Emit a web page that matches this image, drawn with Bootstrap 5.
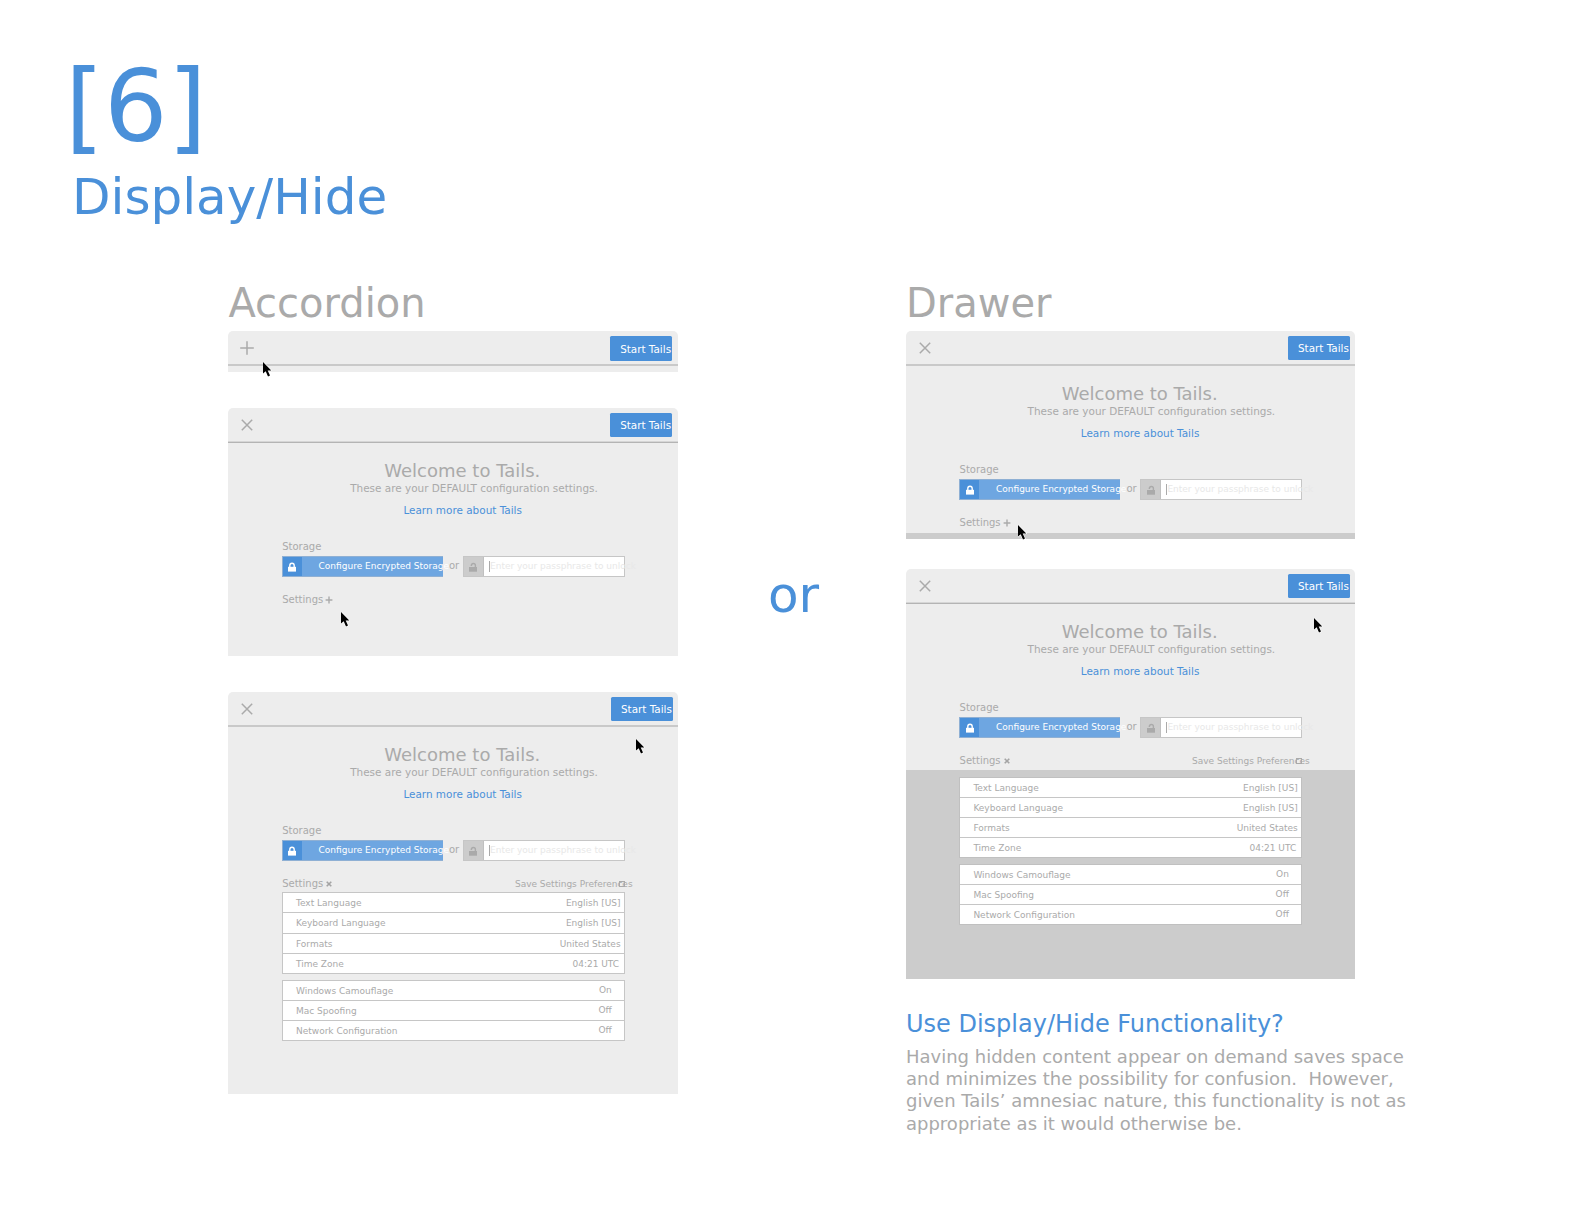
<!DOCTYPE html>
<html lang="en">
<head>
<meta charset="utf-8">
<meta name="viewport" content="width=device-width, initial-scale=1">
<title>[6] Display/Hide</title>
<link href="https://cdn.jsdelivr.net/npm/bootstrap@5.3.0/dist/css/bootstrap.min.css" rel="stylesheet">
<style>
  :root { --tails-blue: #4a90d9; --tails-gray: #aaaaaa; --tails-line: #c6c6c6; --tails-panel: #ededed; --tails-dark: #cccccc; }
  body { font-family: "DejaVu Sans", sans-serif; color: var(--tails-gray); background: #fff; width: 1584px; height: 1224px; overflow: hidden; }
  svg { display: block; overflow: visible; }
  .blue { color: var(--tails-blue); }
  .page-head { padding: 57px 0 0 65px; height: 283px; }
  .page-num { font-size: 100px; line-height: 100px; margin: 0 0 15px; font-weight: 400; }
  .page-title { font-size: 50px; line-height: 50px; margin: 0 0 0 7px; font-weight: 400; }
  .flow { padding-left: 228.4px; }
  .flow-col { width: 449px; }
  .flow-col-a { width: 449.6px; }
  .flow-name { font-size: 40px; line-height: 40px; margin: 0 0 8px; font-weight: 400; white-space: nowrap; }
  .flow-or { width: 228px; padding: 287px 0 0 90px; font-size: 50px; line-height: 50px; }
  .panel { background: var(--tails-panel); border-radius: 5px 5px 0 0; }
  .panel-bar { height: 35px; padding: 5px 5px 0 12px; border-bottom: 2px solid #c9c9c9; }
  .flow-col-a .panel-bar { padding-right: 5.8px; }
  .panel-bar.fine { border-bottom: 1px solid #b4b4b4; box-shadow: inset 0 -1px #d6d6d6; }
  .toggle { margin-top: 5px; }
  .btn-start { width: 62px; height: 24px; padding: 0 0 0 10px; border: 0; border-radius: 1.5px; background: var(--tails-blue); color: #fff; font-size: 10.4px; line-height: 24px; text-align: left; white-space: nowrap; }
  .btn-start.tall { height: 25px; line-height: 26px; }
  .inner { padding: 0 53.3px 0 53.4px; }
  .flow-col-a .inner { padding: 0 53.4px 0 53.6px; }
  .welcome { font-size: 18px; line-height: 22px; margin: 17px 0 0 102.3px; font-weight: 400; white-space: nowrap; }
  .defaults { font-size: 10.45px; line-height: 14px; margin: -1px 0 0 68.2px; white-space: nowrap; }
  .learn { font-size: 10.45px; line-height: 14px; margin: 8px 0 24px 121.4px; white-space: nowrap; }
  .learn a { color: var(--tails-blue); text-decoration: none; }
  .label { font-size: 10px; line-height: 12px; white-space: nowrap; padding-left: .2px; }
  .storage { height: 21px; margin: 3px 0 17px; }
  .btn-config { width: 161px; height: 21px; border: 1px solid #8fb0d4; border-right: 0; background: #6ea6e1; color: #fff; font-size: 9px; line-height: 19px; white-space: nowrap; border-radius: 0; padding: 0; text-align: left; flex: none; }
  .lock-cell { width: 19px; height: 19px; background: var(--tails-blue); flex: none; }
  .config-text { padding-left: 16.6px; flex: none; }
  .or-small { width: 20px; padding-left: 6px; font-size: 10px; line-height: 20px; flex: none; position: relative; }
  .pass { flex: 1; height: 21px; border: 1px solid var(--tails-line); background: #fff; font-size: 9px; line-height: 19px; }
  .pass .lock-cell { width: 20px; background: var(--tails-dark); border-right: 1px solid #c0c0c0; }
  .pass-text { color: #e8e8e8; white-space: nowrap; width: 0; padding-left: 5px; }
  .caret { width: 1px; height: 11px; margin: 4px 0 0; background: #aaa; flex: none; }
  .settings-line { height: 12px; }
  .sign { margin: 2px 0 0 2.3px; }
  .save { font-size: 9px; line-height: 12px; white-space: nowrap; }
  .tick { right: 0; top: 3px; width: 6px; height: 6px; border: 1px solid #aaa; }
  .opts { margin-top: 2px; background: #fff; border: 1px solid var(--tails-line); font-size: 9px; }
  .opts + .opts { margin-top: 6px; }
  .opts-4 { height: 82px; }
  .opts-3 { height: 61px; }
  .opt { flex: 1 1 0; padding-left: 13px; line-height: 20px; min-height: 0; }
  .opt + .opt { border-top: 1px solid var(--tails-line); }
  .end-a { padding-right: 3px; } .end-b { padding-right: 4.5px; } .end-c { padding-right: 11.8px; line-height: 18px; }
  .drawer-lip { height: 6px; background: var(--tails-dark); }
  .drawer-body { background: var(--tails-dark); margin-top: 3px; padding: 7px 53.3px 0 53.4px; height: 209px; }
  .drawer-body .opts { margin-top: 0; border-color: #c0c0c0; }
  .drawer-body .opts-4 { height: 81px; }
  .drawer-body .opts + .opts { margin-top: 6px; }
  .drawer-body .end-c { line-height: 19px; }
  .cursor { width: 9px; height: 15px; }
  .note-title { font-size: 24px; line-height: 30px; margin: 30px 0 7px; font-weight: 400; white-space: nowrap; }
  .note-text { font-size: 18px; line-height: 22.2px; margin: 0; white-space: pre; }
</style>
</head>
<body>
<svg width="0" height="0" class="position-absolute" aria-hidden="true">
  <symbol id="i-plus" viewBox="0 0 14 14"><path d="M7 .2v13.6M.2 7h13.6" stroke="#aaa" stroke-width="1.5"/></symbol>
  <symbol id="i-x" viewBox="0 0 14 14"><path d="M1.8 1.8l10.4 10.4M12.2 1.8L1.8 12.2" stroke="#aaa" stroke-width="1.5"/></symbol>
  <symbol id="i-plus-sm" viewBox="0 0 8 8"><path d="M4 .6v6.8M.6 4h6.8" stroke="#aaa" stroke-width="1.4"/></symbol>
  <symbol id="i-x-sm" viewBox="0 0 8 8"><path d="M1.7 1.7l4.6 4.6M6.3 1.7L1.7 6.3" stroke="#a4a4a4" stroke-width="1.6"/></symbol>
  <symbol id="i-lock" viewBox="0 0 10 10"><path d="M1 4.8h8v4.8H1z" fill="#fff"/><path d="M2.8 5V3.4a2.2 2.2 0 0 1 4.4 0V5" fill="none" stroke="#fff" stroke-width="1.4"/></symbol>
  <symbol id="i-unlock" viewBox="0 0 10 10"><path d="M1 5h8v4.7H1z" fill="#aaa"/><path d="M3.3 3.9C3.3 2.2 4.2 1.5 5.3 1.5S7.4 2.3 7.4 3.6v1.8" fill="none" stroke="#aaa" stroke-width="1.4"/></symbol>
  <symbol id="i-cursor" viewBox="0 0 9 15"><path d="M0 0v11.6l2.7-2.4 2.3 5.3 2-.9-2.3-5.1h3.6z" fill="#000" stroke="#fff" stroke-width="1.2" paint-order="stroke"/></symbol>
</svg>

<header class="page-head blue">
  <h1 class="page-num">[6]</h1>
  <h2 class="page-title">Display/Hide</h2>
</header>

<main class="flow d-flex align-items-start">
  <section class="flow-col-a">
    <h3 class="flow-name">Accordion</h3>

    <div class="panel position-relative" style="height:41px;margin-bottom:36px">
      <div class="panel-bar d-flex justify-content-between align-items-start">
        <svg class="toggle" width="14" height="14"><use href="#i-plus"/></svg>
        <button class="btn btn-start tall">Start Tails</button>
      </div>
      <svg class="cursor position-absolute" style="left:35px;top:31px"><use href="#i-cursor"/></svg>
    </div>

    <div class="panel position-relative" style="height:248px;margin-bottom:36px">
      <div class="panel-bar fine d-flex justify-content-between align-items-start">
        <svg class="toggle" width="14" height="14"><use href="#i-x"/></svg>
        <button class="btn btn-start">Start Tails</button>
      </div>
      <div class="inner">
        <h4 class="welcome">Welcome to Tails.</h4>
        <p class="defaults">These are your DEFAULT configuration settings.</p>
        <p class="learn"><a href="#">Learn more about Tails</a></p>
        <div class="label">Storage</div>
        <div class="storage d-flex">
          <button class="btn btn-config d-flex"><span class="lock-cell d-flex justify-content-center align-items-center"><svg width="10" height="10"><use href="#i-lock"/></svg></span><span class="config-text">Configure Encrypted Storage</span></button>
          <span class="or-small">or</span>
          <div class="pass d-flex"><span class="lock-cell d-flex justify-content-center align-items-center"><svg width="10" height="10"><use href="#i-unlock"/></svg></span><span class="pass-text d-flex"><span class="caret"></span>Enter your passphrase to unlock</span></div>
        </div>
        <div class="settings-line d-flex"><span class="label">Settings</span><svg class="sign" width="8" height="8"><use href="#i-plus-sm"/></svg></div>
      </div>
      <svg class="cursor position-absolute" style="left:113px;top:204px"><use href="#i-cursor"/></svg>
    </div>

    <div class="panel position-relative" style="height:402px">
      <div class="panel-bar d-flex justify-content-between align-items-start" style="padding-right:5px">
        <svg class="toggle" width="14" height="14"><use href="#i-x"/></svg>
        <button class="btn btn-start">Start Tails</button>
      </div>
      <div class="inner">
        <h4 class="welcome">Welcome to Tails.</h4>
        <p class="defaults">These are your DEFAULT configuration settings.</p>
        <p class="learn"><a href="#">Learn more about Tails</a></p>
        <div class="label">Storage</div>
        <div class="storage d-flex">
          <button class="btn btn-config d-flex"><span class="lock-cell d-flex justify-content-center align-items-center"><svg width="10" height="10"><use href="#i-lock"/></svg></span><span class="config-text">Configure Encrypted Storage</span></button>
          <span class="or-small">or</span>
          <div class="pass d-flex"><span class="lock-cell d-flex justify-content-center align-items-center"><svg width="10" height="10"><use href="#i-unlock"/></svg></span><span class="pass-text d-flex"><span class="caret"></span>Enter your passphrase to unlock</span></div>
        </div>
        <div class="settings-line d-flex position-relative"><span class="label">Settings</span><svg class="sign" width="8" height="8"><use href="#i-x-sm"/></svg><span class="save ms-auto" style="margin-right:-8px">Save Settings Preferences</span><span class="tick position-absolute"></span></div>
        <div class="opts opts-4 d-flex flex-column">
          <div class="opt d-flex justify-content-between"><span>Text Language</span><span class="end-a">English [US]</span></div>
          <div class="opt d-flex justify-content-between"><span>Keyboard Language</span><span class="end-a">English [US]</span></div>
          <div class="opt d-flex justify-content-between"><span>Formats</span><span class="end-a">United States</span></div>
          <div class="opt d-flex justify-content-between"><span>Time Zone</span><span class="end-b">04:21 UTC</span></div>
        </div>
        <div class="opts opts-3 d-flex flex-column">
          <div class="opt d-flex justify-content-between"><span>Windows Camouflage</span><span class="end-c">On</span></div>
          <div class="opt d-flex justify-content-between"><span>Mac Spoofing</span><span class="end-c">Off</span></div>
          <div class="opt d-flex justify-content-between"><span>Network Configuration</span><span class="end-c">Off</span></div>
        </div>
      </div>
      <svg class="cursor position-absolute" style="left:408px;top:47px"><use href="#i-cursor"/></svg>
    </div>
  </section>

  <div class="flow-or blue">or</div>

  <section class="flow-col">
    <h3 class="flow-name">Drawer</h3>

    <div class="panel position-relative" style="height:208px;margin-bottom:30px">
      <div class="panel-bar d-flex justify-content-between align-items-start">
        <svg class="toggle" width="14" height="14"><use href="#i-x"/></svg>
        <button class="btn btn-start">Start Tails</button>
      </div>
      <div class="inner">
        <h4 class="welcome">Welcome to Tails.</h4>
        <p class="defaults">These are your DEFAULT configuration settings.</p>
        <p class="learn"><a href="#">Learn more about Tails</a></p>
        <div class="label">Storage</div>
        <div class="storage d-flex">
          <button class="btn btn-config d-flex"><span class="lock-cell d-flex justify-content-center align-items-center"><svg width="10" height="10"><use href="#i-lock"/></svg></span><span class="config-text">Configure Encrypted Storage</span></button>
          <span class="or-small">or</span>
          <div class="pass d-flex"><span class="lock-cell d-flex justify-content-center align-items-center"><svg width="10" height="10"><use href="#i-unlock"/></svg></span><span class="pass-text d-flex"><span class="caret"></span>Enter your passphrase to unlock</span></div>
        </div>
        <div class="settings-line d-flex"><span class="label">Settings</span><svg class="sign" width="8" height="8"><use href="#i-plus-sm"/></svg></div>
      </div>
      <div class="drawer-lip" style="margin-top:4px"></div>
      <svg class="cursor position-absolute" style="left:112px;top:194px"><use href="#i-cursor"/></svg>
    </div>

    <div class="panel position-relative">
      <div class="panel-bar fine d-flex justify-content-between align-items-start">
        <svg class="toggle" width="14" height="14"><use href="#i-x"/></svg>
        <button class="btn btn-start">Start Tails</button>
      </div>
      <div class="inner">
        <h4 class="welcome">Welcome to Tails.</h4>
        <p class="defaults">These are your DEFAULT configuration settings.</p>
        <p class="learn"><a href="#">Learn more about Tails</a></p>
        <div class="label">Storage</div>
        <div class="storage d-flex">
          <button class="btn btn-config d-flex"><span class="lock-cell d-flex justify-content-center align-items-center"><svg width="10" height="10"><use href="#i-lock"/></svg></span><span class="config-text">Configure Encrypted Storage</span></button>
          <span class="or-small">or</span>
          <div class="pass d-flex"><span class="lock-cell d-flex justify-content-center align-items-center"><svg width="10" height="10"><use href="#i-unlock"/></svg></span><span class="pass-text d-flex"><span class="caret"></span>Enter your passphrase to unlock</span></div>
        </div>
        <div class="settings-line d-flex position-relative"><span class="label">Settings</span><svg class="sign" width="8" height="8"><use href="#i-x-sm"/></svg><span class="save ms-auto" style="margin-right:-8px">Save Settings Preferences</span><span class="tick position-absolute"></span></div>
      </div>
      <div class="drawer-body">
        <div class="opts opts-4 d-flex flex-column">
          <div class="opt d-flex justify-content-between"><span>Text Language</span><span class="end-a">English [US]</span></div>
          <div class="opt d-flex justify-content-between"><span>Keyboard Language</span><span class="end-a">English [US]</span></div>
          <div class="opt d-flex justify-content-between"><span>Formats</span><span class="end-a">United States</span></div>
          <div class="opt d-flex justify-content-between"><span>Time Zone</span><span class="end-b">04:21 UTC</span></div>
        </div>
        <div class="opts opts-3 d-flex flex-column">
          <div class="opt d-flex justify-content-between"><span>Windows Camouflage</span><span class="end-c">On</span></div>
          <div class="opt d-flex justify-content-between"><span>Mac Spoofing</span><span class="end-c">Off</span></div>
          <div class="opt d-flex justify-content-between"><span>Network Configuration</span><span class="end-c">Off</span></div>
        </div>
      </div>
      <svg class="cursor position-absolute" style="left:408px;top:49px"><use href="#i-cursor"/></svg>
    </div>

    <h3 class="note-title blue">Use Display/Hide Functionality?</h3>
    <p class="note-text">Having hidden content appear on demand saves space
and minimizes the possibility for confusion.  However,
given Tails’ amnesiac nature, this functionality is not as
appropriate as it would otherwise be.</p>
  </section>
</main>
<script src="https://cdn.jsdelivr.net/npm/bootstrap@5.3.0/dist/js/bootstrap.bundle.min.js"></script>
</body>
</html>
